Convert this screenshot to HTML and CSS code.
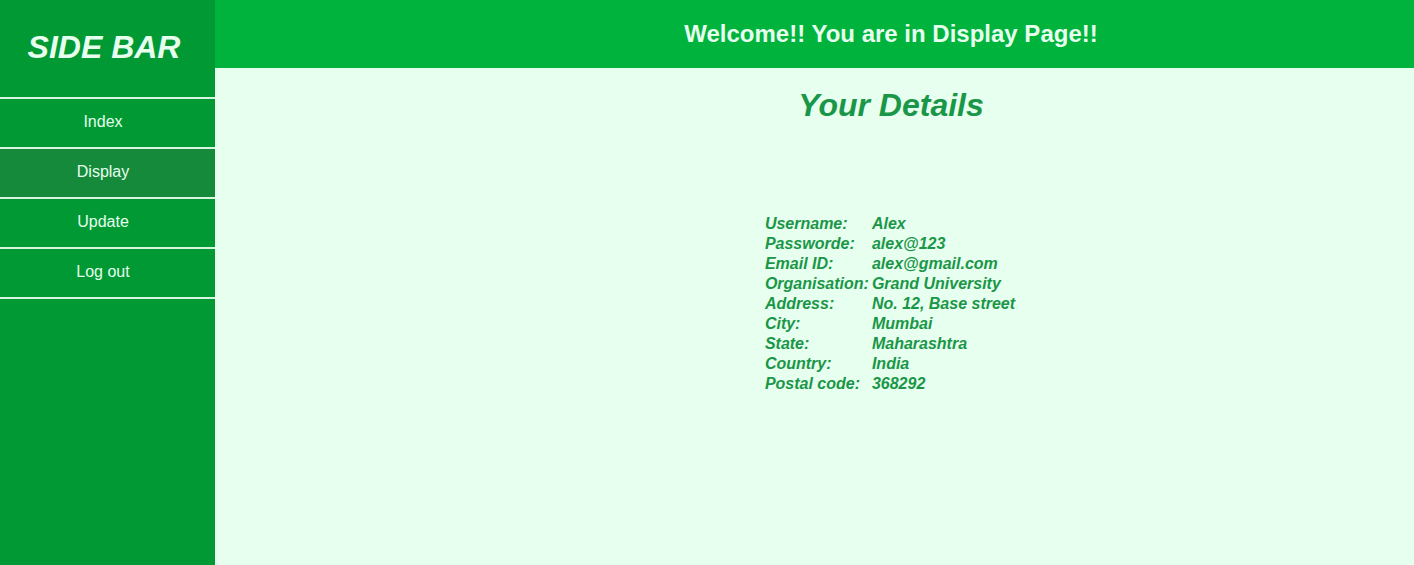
FILE: index.html
```html
<!DOCTYPE html>
<html>
<head>
<meta charset="utf-8">
<link rel="stylesheet" href="styles.css">
</head>
<body>
<div class="page">
  <aside class="sidebar">
    <div class="brand">SIDE BAR</div>
    <nav class="nav">
      <a class="nav-item">Index</a>
      <a class="nav-item active">Display</a>
      <a class="nav-item">Update</a>
      <a class="nav-item">Log out</a>
    </nav>
  </aside>
  <div class="main">
    <header class="topbar"><h1>Welcome!! You are in Display Page!!</h1></header>
    <section class="content">
      <h2 class="title">Your Details</h2>
      <table class="details">
        <tr><td>Username:</td><td>Alex</td></tr>
        <tr><td>Passworde:</td><td>alex@123</td></tr>
        <tr><td>Email ID:</td><td>alex@gmail.com</td></tr>
        <tr><td>Organisation:</td><td>Grand University</td></tr>
        <tr><td>Address:</td><td>No. 12, Base street</td></tr>
        <tr><td>City:</td><td>Mumbai</td></tr>
        <tr><td>State:</td><td>Maharashtra</td></tr>
        <tr><td>Country:</td><td>India</td></tr>
        <tr><td>Postal code:</td><td>368292</td></tr>
      </table>
    </section>
  </div>
</div>
</body>
</html>
```
FILE: styles.css
```css
html, body {
  margin: 0;
  padding: 0;
  height: 100%;
}
body {
  font-family: "Liberation Sans", Arial, sans-serif;
  background: #e6ffee;
}
.page {
  display: flex;
  height: 565px;
}
.sidebar {
  width: 215px;
  flex: none;
  background: #009933;
  color: #e6ffee;
}
.brand {
  height: 97px;
  display: flex;
  align-items: center;
  justify-content: center;
  font-size: 32px;
  font-weight: bold;
  font-style: italic;
  padding: 0 7px 3px 0;
  box-sizing: border-box;
}
.nav {
  display: flex;
  flex-direction: column;
  border-top: 2px solid #d9f5e2;
}
.nav-item {
  height: 50px;
  display: flex;
  align-items: center;
  justify-content: center;
  padding: 0 9px 2px 0;
  box-sizing: border-box;
  font-size: 16px;
  color: #e6ffee;
  border-bottom: 2px solid #d9f5e2;
}
.nav-item.active {
  background: #158a3b;
}
.main {
  flex: 1;
  display: flex;
  flex-direction: column;
}
.topbar {
  height: 68px;
  background: #00b33c;
  display: flex;
  align-items: center;
  justify-content: center;
  padding-left: 153px;
}
.topbar h1 {
  margin: 0;
  font-size: 24px;
  font-weight: bold;
  color: #e6ffee;
  padding-bottom: 1px;
}
.content {
  display: flex;
  flex-direction: column;
  align-items: center;
  padding-left: 153px;
  color: #1a9648;
}
.title {
  margin: 19px 0 0;
  font-size: 32px;
  font-style: italic;
  font-weight: bold;
  line-height: 36px;
}
.details {
  margin-top: 90px;
  margin-right: 2px;
  border-spacing: 0 2px;
  font-size: 16px;
  font-weight: bold;
  font-style: italic;
  color: #1a9648;
}
.details td {
  padding: 0;
  line-height: 18px;
}
.details td:first-child {
  padding-right: 3px;
}
```
